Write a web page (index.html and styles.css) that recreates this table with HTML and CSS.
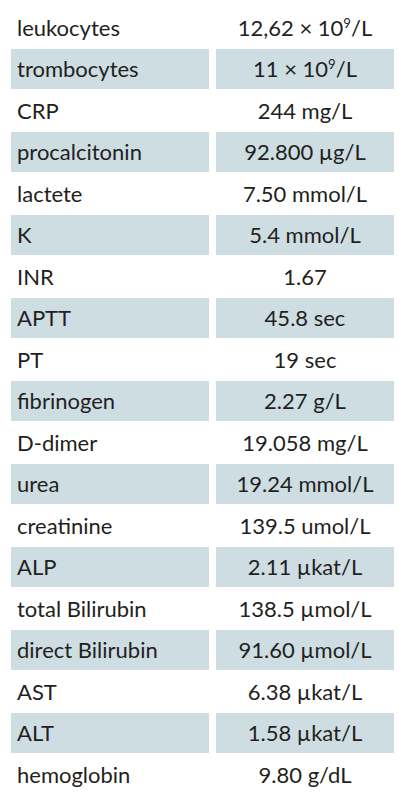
FILE: index.html
```html
<!DOCTYPE html>
<html>
<head>
<meta charset="utf-8">
<link rel="stylesheet" href="styles.css">
</head>
<body>
<table class="labs">
<tr><td class="name">leukocytes</td><td class="val">12,62 × 10<sup>9</sup>/L</td></tr>
<tr class="alt"><td class="name">trombocytes</td><td class="val">11 × 10<sup>9</sup>/L</td></tr>
<tr><td class="name">CRP</td><td class="val">244 mg/L</td></tr>
<tr class="alt"><td class="name">procalcitonin</td><td class="val">92.800 µg/L</td></tr>
<tr><td class="name">lactete</td><td class="val">7.50 mmol/L</td></tr>
<tr class="alt"><td class="name">K</td><td class="val">5.4 mmol/L</td></tr>
<tr><td class="name">INR</td><td class="val">1.67</td></tr>
<tr class="alt"><td class="name">APTT</td><td class="val">45.8 sec</td></tr>
<tr><td class="name">PT</td><td class="val">19 sec</td></tr>
<tr class="alt"><td class="name">fibrinogen</td><td class="val">2.27 g/L</td></tr>
<tr><td class="name">D-dimer</td><td class="val">19.058 mg/L</td></tr>
<tr class="alt"><td class="name">urea</td><td class="val">19.24 mmol/L</td></tr>
<tr><td class="name">creatinine</td><td class="val">139.5 umol/L</td></tr>
<tr class="alt"><td class="name">ALP</td><td class="val">2.11 µkat/L</td></tr>
<tr><td class="name">total Bilirubin</td><td class="val">138.5 µmol/L</td></tr>
<tr class="alt"><td class="name">direct Bilirubin</td><td class="val">91.60 µmol/L</td></tr>
<tr><td class="name">AST</td><td class="val">6.38 µkat/L</td></tr>
<tr class="alt"><td class="name">ALT</td><td class="val">1.58 µkat/L</td></tr>
<tr><td class="name">hemoglobin</td><td class="val">9.80 g/dL</td></tr>
</table>
</body>
</html>
```
FILE: styles.css
```css
html, body {
  margin: 0;
  padding: 0;
  background: #ffffff;
}
.labs {
  border-collapse: separate;
  border-spacing: 7px 2px;
  margin: 5.5px 0 0 4px;
  table-layout: fixed;
  width: 397px;
  font-family: "Lato", "Open Sans", sans-serif;
  font-size: 22px;
  color: #231f20;
}
.labs td {
  height: 39.5px;
  padding: 1px 0 0 0;
  box-sizing: border-box;
  line-height: 38px;
  white-space: nowrap;
}
.name {
  width: 198px;
  padding-left: 6px !important;
  text-align: left;
}
.val {
  width: 178px;
  text-align: center;
}
.alt td {
  background: #cddde2;
}
sup {
  font-size: 0.6em;
  line-height: 0;
  vertical-align: 0.6em;
}
```
